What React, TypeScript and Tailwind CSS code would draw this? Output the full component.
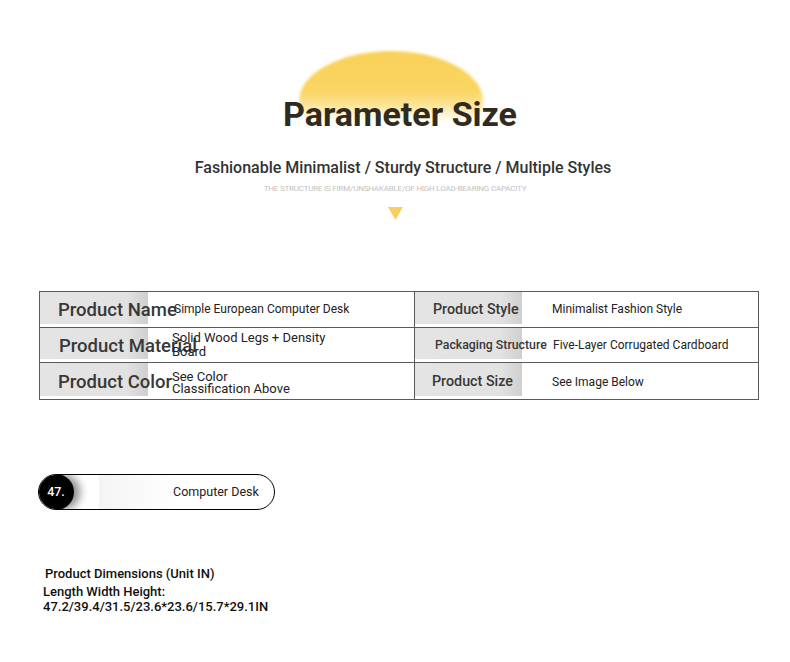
import React from "react";

const labelBg = "bg-[linear-gradient(90deg,#e4e4e4_0%,#e2e2e2_80%,#cfcfcf_100%)]";

function Cell({
  label,
  value,
  labelW,
  labelCls,
  valueCls,
  valuePl,
}: {
  label: string;
  value: React.ReactNode;
  labelW: string;
  labelCls: string;
  valueCls: string;
  valuePl: string;
}) {
  return (
    <div className="relative flex h-full items-center">
      <div className={`absolute left-0 top-0 bottom-[3px] ${labelW} ${labelBg}`} />
      <div className={`relative whitespace-nowrap ${labelCls}`}>{label}</div>
      <div className={`absolute top-0 bottom-0 flex items-center ${valuePl} ${valueCls}`}>{value}</div>
    </div>
  );
}

export default function App() {
  return (
    <div className="w-[790px] h-[662px] bg-white overflow-hidden relative" style={{ fontFamily: "Roboto, 'Liberation Sans', sans-serif" }}>
      {/* Header */}
      <div className="flex flex-col items-center pt-[47px]">
        <div className="relative w-[240px] h-[88px] flex justify-center">
          <div className="absolute top-[4px] left-[24px] w-[184px] h-[100px] rounded-[50%] bg-[linear-gradient(180deg,#f9d158_0%,#fad562_40%,#fce59c_55%,#fff4d6_64%,#ffffff_72%)] blur-[1.5px]" />
          <div className="absolute top-[47px] ml-[10px] text-[34px] leading-[40px] font-bold text-[#2f2b20] whitespace-nowrap">
            Parameter Size
          </div>
        </div>
        <div className="mt-[23px] ml-[16px] text-[16px] leading-[20px] font-medium text-[#333] whitespace-nowrap">
          Fashionable Minimalist / Sturdy Structure / Multiple Styles
        </div>
        <div className="mt-[6px] text-[8px] leading-[10px] text-[#c2c2c2] tracking-[-0.2px] whitespace-nowrap">
          THE STRUCTURE IS FIRM/UNSHAKABLE/OF HIGH LOAD-BEARING CAPACITY
        </div>
        <svg className="mt-[13px]" width="15" height="13" viewBox="0 0 15 13">
          <polygon points="0,0 15,0 7.5,13" fill="#f8cf5e" />
        </svg>
      </div>

      {/* Table */}
      <div className="absolute left-[39px] top-[291px] w-[720px] h-[109px] border border-[#5a5a5a] grid grid-cols-[375px_1fr] grid-rows-3 text-[#383838]">
        <div className="border-r border-b border-[#5a5a5a]">
          <Cell label="Product Name" labelW="w-[108px]" labelCls="pl-[18px] pt-[3px] text-[18.5px] font-medium" valueCls="text-[12px] text-[#222]" valuePl="left-[134px]" value="Simple European Computer Desk" />
        </div>
        <div className="border-b border-[#5a5a5a]">
          <Cell label="Product Style" labelW="w-[107px]" labelCls="pl-[18px] pt-[1px] text-[14.3px] font-medium" valueCls="text-[12px] text-[#222]" valuePl="left-[137px]" value="Minimalist Fashion Style" />
        </div>
        <div className="border-r border-b border-[#5a5a5a]">
          <Cell label="Product Material" labelW="w-[108px]" labelCls="pl-[19px] pt-[3px] text-[18.5px] font-medium" valueCls="text-[13px] text-[#222] leading-[14px] pt-[1px]" valuePl="left-[132px]" value={<div className="w-[170px]">Solid Wood Legs + Density Board</div>} />
        </div>
        <div className="border-b border-[#5a5a5a]">
          <Cell label="Packaging Structure" labelW="w-[107px]" labelCls="pl-[20px] pt-[1px] text-[12.3px] font-medium" valueCls="text-[12px] text-[#222]" valuePl="left-[138px]" value="Five-Layer Corrugated Cardboard" />
        </div>
        <div className="border-r border-[#5a5a5a]">
          <Cell label="Product Color" labelW="w-[108px]" labelCls="pl-[18px] pt-[3px] text-[18.5px] font-medium" valueCls="text-[13px] text-[#222] leading-[12px] pt-[3px]" valuePl="left-[132px]" value={<div className="w-[170px]">See Color<br />Classification Above</div>} />
        </div>
        <div>
          <Cell label="Product Size" labelW="w-[107px]" labelCls="pl-[17px] pt-[2px] text-[14.3px] font-medium" valueCls="text-[12px] text-[#222] pt-[2px]" valuePl="left-[137px]" value="See Image Below" />
        </div>
      </div>

      {/* Pill */}
      <div className="absolute left-[38px] top-[474px] w-[237px] h-[36px] rounded-full border border-black flex items-center overflow-hidden">
        <div className="absolute left-[60px] top-[-2px] w-[80px] h-[40px] bg-[linear-gradient(90deg,#f4f4f4,#ffffff)]" />
        <div className="relative w-[36px] h-[36px] -ml-[1px] rounded-full bg-black flex items-center justify-center text-white text-[12.5px] font-medium shadow-[6px_0_8px_rgba(0,0,0,0.45)]">
          47.
        </div>
        <div className="relative ml-[99px] text-[12.5px] text-[#222]">Computer Desk</div>
      </div>

      {/* Dimensions */}
      <div className="absolute left-[43px] top-[566px] text-[13px] font-medium text-[#111] leading-[15px]">
        <div className="ml-[2px]">Product Dimensions (Unit IN)</div>
        <div className="mt-[3px]">Length Width Height:</div>
        <div>47.2/39.4/31.5/23.6*23.6/15.7*29.1IN</div>
      </div>
    </div>
  );
}
